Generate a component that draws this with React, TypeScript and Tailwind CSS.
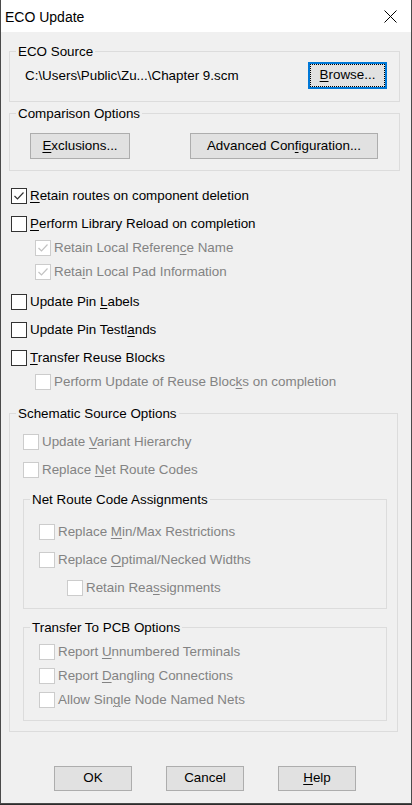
import React from "react";

type LabelProps = { pre?: string; k?: string; post?: string };

function Label({ pre = "", k = "", post = "" }: LabelProps) {
  return (
    <span className="whitespace-pre">
      {pre}
      {k && <span className="underline underline-offset-[2px] decoration-1">{k}</span>}
      {post}
    </span>
  );
}

function Box({ checked, disabled }: { checked?: boolean; disabled?: boolean }) {
  return (
    <span
      className={
        disabled
          ? "w-[16px] h-[16px] shrink-0 border border-[#cccccc] bg-white flex items-center justify-center"
          : "w-[16px] h-[16px] shrink-0 border border-[#333333] bg-white flex items-center justify-center"
      }
    >
      {checked && (
        <svg width="14" height="14" viewBox="0 0 14 14">
          <polyline
            points="2.5,7 5.5,10 11.5,3.5"
            fill="none"
            stroke={disabled ? "#c2c2c2" : "#333333"}
            strokeWidth="1.2"
          />
        </svg>
      )}
    </span>
  );
}

function Check({
  cls,
  checked,
  disabled,
  ...label
}: { cls: string; checked?: boolean; disabled?: boolean } & LabelProps) {
  return (
    <div className={"flex items-center gap-[3px] h-[16px] " + cls}>
      <Box checked={checked} disabled={disabled} />
      <span className={disabled ? "text-[#838383] leading-[16px]" : "text-black leading-[16px]"}>
        <Label {...label} />
      </span>
    </div>
  );
}

function Btn({ w, h, children }: { w: string; h: string; children: React.ReactNode }) {
  return (
    <div className={"bg-[#e1e1e1] border border-[#adadad] flex items-center justify-center text-black " + w + " " + h}>
      {children}
    </div>
  );
}

export default function App() {
  return (
    <div className="w-[412px] h-[805px] bg-[#2d2d2d] font-['Liberation_Sans',Arial,sans-serif] text-[13.4px] text-black">
      <div className="w-[412px] h-[804px] bg-[#f0f0f0] border-l border-r border-b border-[#4a4a4a] flex flex-col">
        {/* Title bar */}
        <div className="h-[32px] bg-white flex items-center justify-between pl-[4px] pr-[14px] shrink-0">
          <span className="text-[14px] leading-[18px] pt-[1px]">ECO Update</span>
          <svg width="13" height="13" viewBox="0 0 13 13">
            <line x1="0.5" y1="0.5" x2="12.5" y2="12.5" stroke="#000" strokeWidth="1" />
            <line x1="12.5" y1="0.5" x2="0.5" y2="12.5" stroke="#000" strokeWidth="1" />
          </svg>
        </div>

        {/* Body */}
        <div className="pl-[8px] flex flex-col">
          {/* ECO Source */}
          <fieldset className="mt-[12px] w-[391px] border border-[#dcdcdc]">
            <legend className="ml-[6px] px-[2px] leading-[15px]">ECO Source</legend>
            <div className="flex items-center justify-between pl-[15px] pr-[12px] pt-[3px] pb-[12px]">
              <span className="leading-[16px]">{"C:\\Users\\Public\\Zu...\\Chapter 9.scm"}</span>
              <div className="w-[79px] h-[27px] border-2 border-[#0078d7] bg-[#e1e1e1] flex">
                <span className="flex-1 flex items-center justify-center border border-dotted border-black">
                  <Label k="B" post="rowse..." />
                </span>
              </div>
            </div>
          </fieldset>

          {/* Comparison Options */}
          <fieldset className="mt-[4px] w-[391px] border border-[#dcdcdc]">
            <legend className="ml-[6px] px-[2px] leading-[15px]">Comparison Options</legend>
            <div className="flex items-center justify-between pl-[20px] pr-[21px] pt-[12px] pb-[11px]">
              <Btn w="w-[100px]" h="h-[26px]">
                <Label k="E" post="xclusions..." />
              </Btn>
              <Btn w="w-[188px]" h="h-[26px]">
                <Label pre="Advanced Con" k="f" post="iguration..." />
              </Btn>
            </div>
          </fieldset>

          {/* Top-level options */}
          <div className="flex flex-col pl-[2px]">
            <Check cls="mt-[17px]" checked k="R" post="etain routes on component deletion" />
            <Check cls="mt-[12px]" k="P" post="erform Library Reload on completion" />
            <div className="flex flex-col pl-[24px]">
              <Check cls="mt-[8px]" checked disabled pre="Retain Local Referen" k="c" post="e Name" />
              <Check cls="mt-[8px]" checked disabled pre="Reta" k="i" post="n Local Pad Information" />
            </div>
            <Check cls="mt-[14px]" pre="Update Pin " k="L" post="abels" />
            <Check cls="mt-[12px]" pre="Update Pin Testl" k="a" post="nds" />
            <Check cls="mt-[12px]" k="T" post="ransfer Reuse Blocks" />
            <div className="flex flex-col pl-[24px]">
              <Check cls="mt-[8px]" disabled pre="Perform Update of Reuse Bloc" k="k" post="s on completion" />
            </div>
          </div>

          {/* Schematic Source Options */}
          <fieldset className="mt-[16px] w-[389px] border border-[#dcdcdc]">
            <legend className="ml-[6px] px-[2px] leading-[15px]">Schematic Source Options</legend>
            <div className="flex flex-col pl-[13px] pt-[13px] pb-[10px]">
              <Check cls="" disabled pre="Update " k="V" post="ariant Hierarchy" />
              <Check cls="mt-[12px]" disabled pre="Replace " k="N" post="et Route Codes" />

              <fieldset className="mt-[14px] w-[364px] border border-[#dcdcdc]">
                <legend className="ml-[6px] px-[2px] leading-[15px]">Net Route Code Assignments</legend>
                <div className="flex flex-col pl-[15px] pt-[17px] pb-[12px]">
                  <Check cls="" disabled pre="Replace " k="M" post="in/Max Restrictions" />
                  <Check cls="mt-[12px]" disabled pre="Replace " k="O" post="ptimal/Necked Widths" />
                  <div className="flex flex-col pl-[28px]">
                    <Check cls="mt-[12px]" disabled pre="Retain Rea" k="s" post="signments" />
                  </div>
                </div>
              </fieldset>

              <fieldset className="mt-[11px] w-[364px] border border-[#dcdcdc]">
                <legend className="ml-[6px] px-[2px] leading-[15px]">Transfer To PCB Options</legend>
                <div className="flex flex-col pl-[15px] pt-[9px] pb-[12px]">
                  <Check cls="" disabled pre="Report " k="U" post="nnumbered Terminals" />
                  <Check cls="mt-[8px]" disabled pre="Report " k="D" post="angling Connections" />
                  <Check cls="mt-[8px]" disabled pre="Allow Sin" k="g" post="le Node Named Nets" />
                </div>
              </fieldset>
            </div>
          </fieldset>

          {/* Bottom buttons */}
          <div className="mt-[34px] pl-[45px] flex gap-[34px]">
            <Btn w="w-[78px]" h="h-[25px]">OK</Btn>
            <Btn w="w-[78px]" h="h-[25px]">Cancel</Btn>
            <Btn w="w-[78px]" h="h-[25px]">
              <Label k="H" post="elp" />
            </Btn>
          </div>
        </div>
      </div>
    </div>
  );
}
